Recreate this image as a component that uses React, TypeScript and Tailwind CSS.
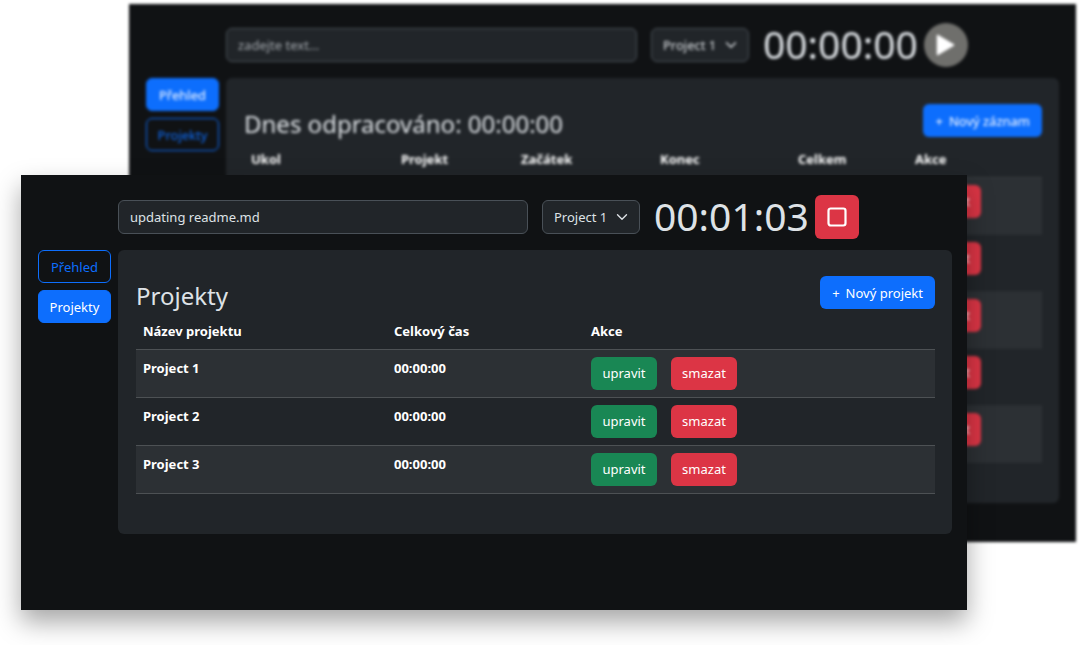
import type { ReactNode } from "react";

type Tab = "overview" | "projects";

const projects = ["Project 1", "Project 2", "Project 3"];
const recordColumns = ["Ukol", "Projekt", "Začátek", "Konec", "Celkem"];
const records = [1, 2, 3, 4, 5];

function Navigation({ active }: { active: Tab }) {
  const base = "h-[33px] w-full rounded-md border border-[#0d6efd]";
  const on = `${base} bg-[#0d6efd] text-white`;
  const off = `${base} text-[#0d6efd]`;
  return (
    <nav className="flex w-[73px] shrink-0 flex-col gap-[7px]">
      <button type="button" className={active === "overview" ? on : off}>
        Přehled
      </button>
      <button type="button" className={active === "projects" ? on : off}>
        Projekty
      </button>
    </nav>
  );
}

function StopIcon() {
  return (
    <svg viewBox="0 0 20 20" className="size-5" fill="none" aria-hidden="true">
      <rect x="1.5" y="1.5" width="17" height="17" rx="2.2" stroke="#fff" strokeWidth="2.2" />
    </svg>
  );
}

function PlayIcon() {
  return (
    <svg viewBox="0 0 44 44" className="size-11" aria-hidden="true">
      <path
        d="M13.5 12.5v19L29.5 22z"
        fill="#fff"
        stroke="#fff"
        strokeWidth="1.5"
        strokeLinejoin="round"
      />
    </svg>
  );
}

function TrackerBar({
  id,
  task,
  time,
  running,
}: {
  id: string;
  task: string;
  time: string;
  running: boolean;
}) {
  return (
    <header className="flex h-11 items-center pr-[108px] pl-[97px]">
      <input
        id={`${id}-task`}
        aria-label="Úkol"
        placeholder="zadejte text..."
        defaultValue={task}
        className="h-[34px] min-w-0 flex-1 rounded-md border border-[#495057] bg-[#212529] px-[11px] text-[#dee2e6] placeholder:text-[#a3a8ad]"
      />
      <div className="relative ml-3.5 w-[98px] shrink-0">
        <select
          id={`${id}-project`}
          aria-label="Projekt"
          className="h-[34px] w-full appearance-none rounded-md border border-[#495057] bg-[#212529] px-[11px] text-[#dee2e6]"
        >
          {projects.map((name) => (
            <option key={name}>{name}</option>
          ))}
        </select>
        <svg
          viewBox="0 0 16 16"
          className="pointer-events-none absolute top-[11px] right-3 size-3"
          fill="none"
          aria-hidden="true"
        >
          <path
            d="m2 5 6 6 6-6"
            stroke="#dee2e6"
            strokeWidth="1.8"
            strokeLinecap="round"
            strokeLinejoin="round"
          />
        </svg>
      </div>
      <time className="ml-3.5 w-[161px] shrink-0 pb-0.5 text-[39px] leading-[42px] text-[#dee2e6]">
        {time}
      </time>
      {running ? (
        <button
          type="button"
          aria-label="Zastavit"
          className="flex size-11 shrink-0 items-center justify-center rounded-md bg-[#dc3545]"
        >
          <StopIcon />
        </button>
      ) : (
        <button
          type="button"
          aria-label="Spustit"
          className="flex size-11 shrink-0 items-center justify-center rounded-full bg-[#6f6f6c]"
        >
          <PlayIcon />
        </button>
      )}
    </header>
  );
}

function Panel({
  title,
  action,
  children,
}: {
  title: string;
  action: string;
  children: ReactNode;
}) {
  return (
    <section className="min-w-0 flex-1 rounded-md bg-[#212529] pt-[26px] pr-[17px] pb-10 pl-[18px]">
      <div className="flex items-start justify-between">
        <h2 className="pt-0.5 text-2xl leading-[35px] text-[#dee2e6]">{title}</h2>
        <button
          type="button"
          className="flex h-[33px] items-center gap-1.5 rounded-md bg-[#0d6efd] px-3 text-white"
        >
          <span>+</span>
          <span>{action}</span>
        </button>
      </div>
      {children}
    </section>
  );
}

function DeleteButton() {
  return (
    <button type="button" className="h-[33px] w-[66px] rounded-md bg-[#dc3545] text-white">
      smazat
    </button>
  );
}

function OverviewWindow() {
  return (
    <div className="mt-1 mr-1 ml-[129px] self-start bg-[#101214] pt-[19px] pb-[39px] blur-[1.4px] [grid-area:1/1]">
      <TrackerBar id="overview" task="" time="00:00:00" running={false} />
      <div className="mt-[11px] flex gap-[7px] pr-[17px] pl-[17px]">
        <Navigation active="overview" />
        <Panel title="Dnes odpracováno: 00:00:00" action="Nový záznam">
          <table className="w-full table-fixed border-collapse text-left font-bold text-white">
            <colgroup>
              <col className="w-[150px]" />
              <col className="w-[120px]" />
              <col className="w-[139px]" />
              <col className="w-[138px]" />
              <col className="w-[117px]" />
              <col />
            </colgroup>
            <thead>
              <tr className="h-9 border-b border-[#373b3e]">
                {recordColumns.map((name) => (
                  <th key={name} className="px-[7px]">
                    {name}
                  </th>
                ))}
                <th className="px-[7px]">Akce</th>
              </tr>
            </thead>
            <tbody>
              {records.map((record) => (
                <tr key={record} className="h-[57px] border-b border-[#2a2e32] align-top odd:bg-[#2c3034]">
                  {recordColumns.map((name) => (
                    <td key={name} />
                  ))}
                  <td className="p-[7px] font-normal">
                    <DeleteButton />
                  </td>
                </tr>
              ))}
            </tbody>
          </table>
        </Panel>
      </div>
    </div>
  );
}

function ProjectsWindow() {
  return (
    <div className="relative mt-[175px] mr-[113px] ml-[21px] self-start bg-[#101214] pt-5 pb-[76px] shadow-[0_12px_24px_rgba(0,0,0,0.35)] [grid-area:1/1]">
      <TrackerBar id="projects" task="updating readme.md" time="00:01:03" running />
      <div className="mt-[11px] flex gap-[7px] pr-[15px] pl-[17px]">
        <Navigation active="projects" />
        <Panel title="Projekty" action="Nový projekt">
          <table className="w-full table-fixed border-collapse text-left font-bold text-white">
            <colgroup>
              <col className="w-[251px]" />
              <col className="w-[197px]" />
              <col />
            </colgroup>
            <thead>
              <tr className="h-9 border-b border-[#4d5154]">
                <th className="px-[7px]">Název projektu</th>
                <th className="px-[7px]">Celkový čas</th>
                <th className="px-[7px]">Akce</th>
              </tr>
            </thead>
            <tbody>
              {projects.map((name) => (
                <tr key={name} className="border-b border-[#4d5154] align-top odd:bg-[#2c3034]">
                  <td className="p-[7px]">{name}</td>
                  <td className="p-[7px]">00:00:00</td>
                  <td className="p-[7px] font-normal">
                    <div className="flex gap-3.5">
                      <button
                        type="button"
                        className="h-[33px] w-[66px] rounded-md bg-[#198754] text-white"
                      >
                        upravit
                      </button>
                      <DeleteButton />
                    </div>
                  </td>
                </tr>
              ))}
            </tbody>
          </table>
        </Panel>
      </div>
    </div>
  );
}

export default function App() {
  return (
    <main className="grid min-h-screen bg-white font-['Noto_Sans',sans-serif] text-[13px] leading-[22px]">
      <OverviewWindow />
      <ProjectsWindow />
    </main>
  );
}
